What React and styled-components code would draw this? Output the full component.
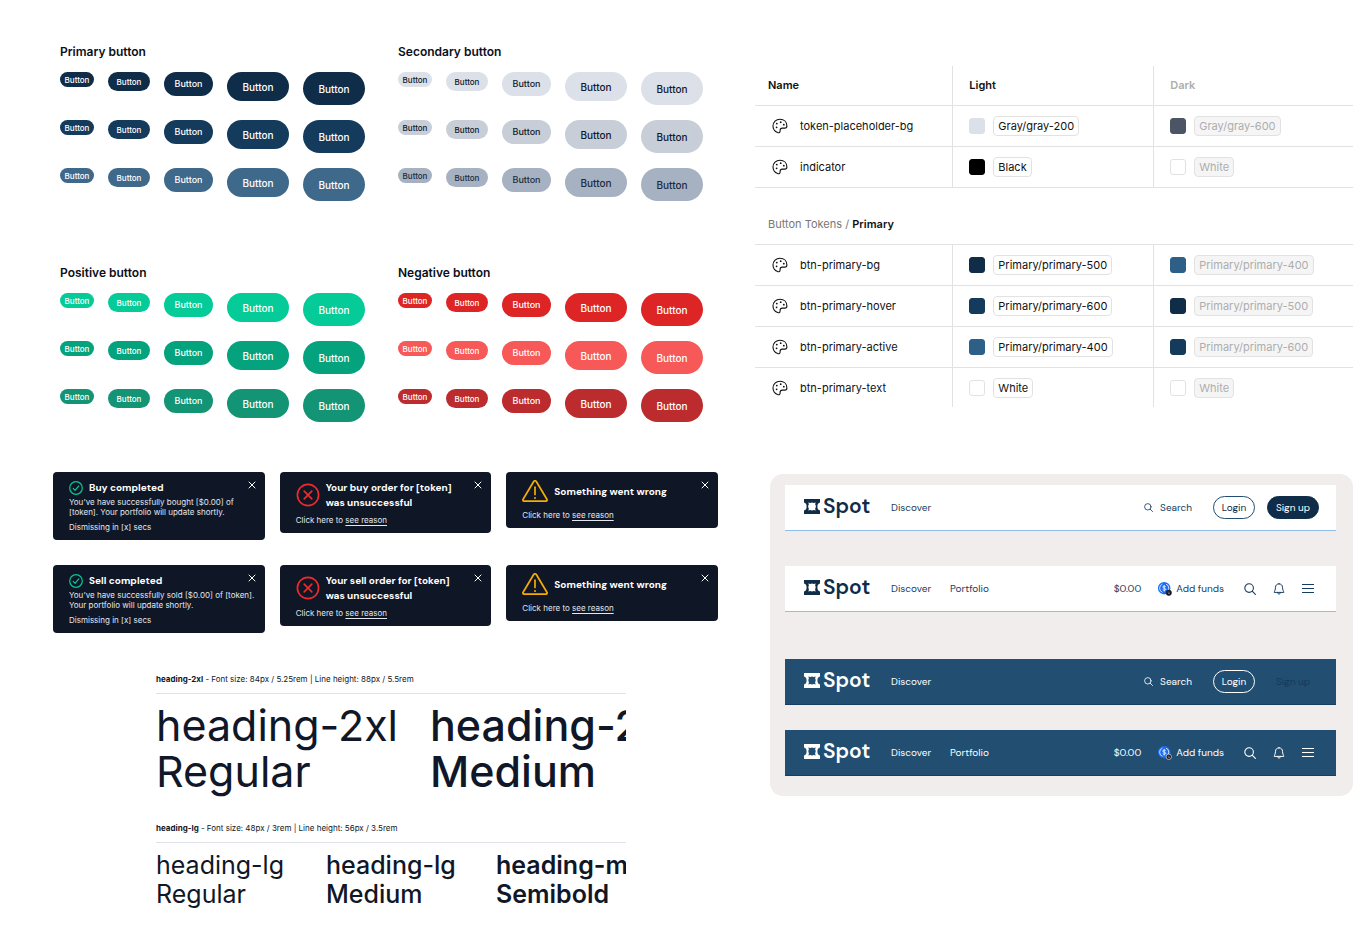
import React from "react";
import styled, { createGlobalStyle } from "styled-components";

const GlobalStyle = createGlobalStyle`
  *, *::before, *::after { box-sizing: border-box; }
  body {
    margin: 0;
    background: #ffffff;
    color: #0f1728;
    font-family: Inter, "Liberation Sans", sans-serif;
  }
  button { font: inherit; color: inherit; border: 0; background: none; padding: 0; margin: 0; cursor: pointer; }
  h1, h2, h3, p { margin: 0; }
  svg { display: block; flex: none; }
`;

const Page = styled.main`
  display: grid;
  grid-template-columns: minmax(0, 665fr) minmax(0, 598fr);
  gap: 37px;
  padding: 44px 18px 36px 53px;
`;

const Column = styled.div`
  min-width: 0;
`;

/* Buttons */

const ButtonGroups = styled.div`
  display: grid;
  grid-template-columns: 338fr 320fr;
  row-gap: 64px;
  padding-left: 7px;
`;

const GroupTitle = styled.h2`
  font-size: 12px;
  line-height: 16px;
  font-weight: 600;
  color: #0a0f18;
  margin-bottom: 12px;
`;

const ButtonRows = styled.div`
  display: flex;
  flex-direction: column;
  gap: 15px;
`;

const ButtonRow = styled.div`
  display: flex;
  align-items: flex-start;
  gap: 14px;
`;

const sizes = {
  xs: { w: 34, h: 15, f: 8 },
  sm: { w: 42, h: 19, f: 8 },
  md: { w: 49, h: 24, f: 9 },
  lg: { w: 62, h: 29, f: 10 },
  xl: { w: 62, h: 33, f: 10 },
};

const PillButton = styled.button`
  width: ${(p) => sizes[p.$size].w}px;
  height: ${(p) => sizes[p.$size].h}px;
  font-size: ${(p) => sizes[p.$size].f}px;
  font-weight: 500;
  line-height: 12px;
  border-radius: 17px;
  background: ${(p) => p.$bg};
  color: ${(p) => p.$fg};
`;

const groups = [
  { title: "Primary button", rows: [["#0f2c49", "#fff"], ["#143a5c", "#fff"], ["#3f698b", "#fff"]] },
  { title: "Secondary button", rows: [["#dce0e9", "#0f1728"], ["#c8ced8", "#0f1728"], ["#a6b2c1", "#1c2a3d"]] },
  { title: "Positive button", rows: [["#05cb98", "#fff"], ["#05a37d", "#fff"], ["#129475", "#fff"]] },
  { title: "Negative button", rows: [["#dd2525", "#fff"], ["#f75858", "#fff"], ["#bc2b2d", "#fff"]] },
];

/* Toasts */

const ToastGrid = styled.div`
  display: grid;
  grid-template-columns: repeat(3, minmax(0, 1fr));
  align-items: start;
  gap: 25px 15px;
  margin-top: 50px;
`;

const ToastCard = styled.article`
  position: relative;
  background: #0f1626;
  color: #e4e7ec;
  border-radius: 4px;
  padding: 8px 8px 8px 16px;
  font-size: 8px;
  line-height: 10px;
  white-space: nowrap;
`;

const ToastHead = styled.div`
  display: flex;
  align-items: center;
  gap: 6px;
  min-height: ${(p) => p.$height}px;
  margin-bottom: ${(p) => p.$after}px;
`;

const ToastTitle = styled.h3`
  font-family: "DM Sans", Inter, sans-serif;
  font-size: 10px;
  line-height: 15px;
  font-weight: 700;
  color: #ffffff;
  white-space: pre-line;
`;

const ToastNote = styled.p`
  margin-top: 5px;
`;

const ReasonLink = styled.a`
  color: inherit;
  text-decoration: underline;
  text-underline-offset: 2px;
`;

const CloseButton = styled.button`
  position: absolute;
  top: 9px;
  right: 9px;
  color: #ffffff;
`;

const CloseIcon = () => (
  <svg width="8" height="8" viewBox="0 0 8 8" stroke="currentColor" strokeWidth="1" strokeLinecap="round">
    <path d="M1 1 7 7M7 1 1 7" />
  </svg>
);

const CheckIcon = () => (
  <svg width="14" height="14" viewBox="0 0 14 14" fill="none" stroke="#08c796" strokeWidth="1.2" strokeLinecap="round" strokeLinejoin="round">
    <circle cx="7" cy="7" r="6.3" />
    <path d="M4.2 7.4 6.1 9.3 9.8 4.9" />
  </svg>
);

const ErrorIcon = () => (
  <svg width="24" height="24" viewBox="0 0 24 24" fill="none" stroke="#ee2a2a" strokeWidth="1.7" strokeLinecap="round">
    <circle cx="12" cy="12" r="10.6" />
    <path d="m8.2 8.2 7.6 7.6m0-7.6-7.6 7.6" />
  </svg>
);

const WarningIcon = () => (
  <svg width="26" height="22" viewBox="0 0 26 22" fill="none" stroke="#f5ad05" strokeWidth="1.7" strokeLinecap="round" strokeLinejoin="round">
    <path d="M11.7 1.5a1.5 1.5 0 0 1 2.6 0l10.6 17.7a1.3 1.3 0 0 1-1.1 2H2.2a1.3 1.3 0 0 1-1.1-2Z" />
    <path d="M13 7.2v7.2" />
    <path d="M13 17.9v.1" strokeWidth="2" />
  </svg>
);

function SuccessToast({ title, children }) {
  return (
    <ToastCard>
      <ToastHead $height={14} $after={2}>
        <CheckIcon />
        <ToastTitle>{title}</ToastTitle>
      </ToastHead>
      <p>{children}</p>
      <ToastNote>Dismissing in [x] secs</ToastNote>
      <CloseButton aria-label="Close"><CloseIcon /></CloseButton>
    </ToastCard>
  );
}

function ReasonToast({ title, icon, height, after }) {
  return (
    <ToastCard>
      <ToastHead $height={height} $after={after}>
        {icon}
        <ToastTitle>{title}</ToastTitle>
      </ToastHead>
      <p>Click here to <ReasonLink href="#reason">see reason</ReasonLink></p>
      <CloseButton aria-label="Close"><CloseIcon /></CloseButton>
    </ToastCard>
  );
}

/* Typography */

const TypeSpecs = styled.div`
  display: flex;
  flex-direction: column;
  gap: 28px;
  margin: 40px 92px 0 103px;
`;

const SpecCaption = styled.p`
  font-size: 8px;
  line-height: 12px;
  padding-bottom: 8px;
  border-bottom: 1px solid #dfe1e8;
  margin-bottom: 8px;
`;

const Samples = styled.div`
  display: grid;
  grid-auto-flow: column;
  grid-auto-columns: ${(p) => p.$column}px;
  overflow-x: clip;
  font-size: ${(p) => p.$size}px;
  line-height: ${(p) => p.$line}px;
`;

const Sample = styled.p`
  font-weight: ${(p) => p.$weight};
  white-space: nowrap;
`;

/* Token table */

const TokenTable = styled.table`
  width: 100%;
  margin-top: 22px;
  border-collapse: separate;
  border-spacing: 0;
  table-layout: fixed;
  font-size: 11px;
  line-height: 16px;
  color: #111111;
`;

const HeadCell = styled.th`
  width: ${(p) => p.$width};
  height: 40px;
  padding: 0 0 2px ${(p) => (p.$divided ? 16 : 13)}px;
  text-align: left;
  font-weight: 600;
  color: ${(p) => (p.$muted ? "#adadad" : "#111111")};
  border-bottom: 1px solid #e2e2e2;
  border-left: ${(p) => (p.$divided ? "1px solid #e2e2e2" : "0")};
`;

const Cell = styled.td`
  height: ${(p) => (p.$last ? 39 : 41)}px;
  padding: 0 0 0 ${(p) => (p.$divided ? 16 : 17)}px;
  border-bottom: ${(p) => (p.$last ? "0" : "1px solid #e2e2e2")};
  border-left: ${(p) => (p.$divided ? "1px solid #e2e2e2" : "0")};
`;

const SectionCell = styled.th`
  height: 57px;
  padding: 16px 0 0 13px;
  text-align: left;
  font-weight: 400;
  color: #777777;
  border-bottom: 1px solid #e2e2e2;

  b { font-weight: 600; color: #111111; }
`;

const TokenName = styled.span`
  display: flex;
  align-items: center;
  gap: 12px;
`;

const TokenValue = styled.span`
  display: flex;
  align-items: center;
  gap: 8px;
`;

const Swatch = styled.span`
  width: 16px;
  height: 16px;
  border-radius: 3px;
  background: ${(p) => p.$color};
  border: 1px solid ${(p) => (p.$color === "#ffffff" ? "#e2e2e2" : p.$color)};
`;

const ValueChip = styled.span`
  height: 20px;
  padding: 0 4px;
  line-height: 18px;
  border: 1px solid #e2e2e2;
  border-radius: 4px;
  background: ${(p) => (p.$muted ? "#f5f5f5" : "#ffffff")};
  color: ${(p) => (p.$muted ? "#adadad" : "#111111")};
`;

const PaletteIcon = () => (
  <svg width="16" height="16" viewBox="0 0 16 16" fill="none" stroke="#111" strokeWidth="1.1" strokeLinejoin="round">
    <path d="M8 1.2C4 1.2 1 4.2 1 8c0 3.1 1.8 5.5 4.6 6.6 1.4.5 2.5-.2 2.5-1.6v-.7c0-1.3.9-2.2 2.2-2.2h2.5c1.2 0 2.1-.9 2.1-2.1C14.9 4 12.1 1.2 8 1.2Z" />
    <g fill="#111" stroke="none">
      <circle cx="4.8" cy="5.6" r=".9" />
      <circle cx="8.7" cy="4.2" r=".9" />
      <circle cx="11.8" cy="6.7" r=".9" />
      <circle cx="4.6" cy="9.3" r=".9" />
    </g>
  </svg>
);

const baseTokens = [
  ["token-placeholder-bg", "#dce0e9", "Gray/gray-200", "#4b5565", "Gray/gray-600"],
  ["indicator", "#000000", "Black", "#ffffff", "White"],
];

const primaryTokens = [
  ["btn-primary-bg", "#0f2c49", "Primary/primary-500", "#2d5f87", "Primary/primary-400"],
  ["btn-primary-hover", "#143a5c", "Primary/primary-600", "#0f2c49", "Primary/primary-500"],
  ["btn-primary-active", "#2d5f87", "Primary/primary-400", "#143a5c", "Primary/primary-600"],
  ["btn-primary-text", "#ffffff", "White", "#ffffff", "White"],
];

function TokenRow({ token, last }) {
  const [name, light, lightName, dark, darkName] = token;
  return (
    <tr>
      <Cell $last={last}><TokenName><PaletteIcon />{name}</TokenName></Cell>
      <Cell $divided $last={last}>
        <TokenValue><Swatch $color={light} /><ValueChip>{lightName}</ValueChip></TokenValue>
      </Cell>
      <Cell $divided $last={last}>
        <TokenValue><Swatch $color={dark} /><ValueChip $muted>{darkName}</ValueChip></TokenValue>
      </Cell>
    </tr>
  );
}

/* Navigation bars */

const NavPanel = styled.section`
  display: flex;
  flex-direction: column;
  gap: 47px;
  margin: 67px 0 0 15px;
  padding: 11px 17px 20px 15px;
  border-radius: 13px;
  background: #f1edec;
`;

const NavGroup = styled.div`
  display: flex;
  flex-direction: column;
  gap: ${(p) => p.$gap}px;
`;

const Bar = styled.nav`
  display: flex;
  align-items: center;
  height: 46px;
  padding: 0 ${(p) => (p.$account ? 22 : 17)}px 0 19px;
  font-family: "DM Sans", Inter, sans-serif;
  font-size: 10px;
  line-height: 14px;
  background: ${(p) => (p.$dark ? "#214e71" : "#ffffff")};
  color: ${(p) => (p.$dark ? "#ffffff" : "#173d60")};
  border-bottom: 1px solid ${(p) => (p.$dark ? "#173d60" : "#8ebfea")};
`;

const Brand = styled.a`
  display: flex;
  align-items: center;
  gap: 3px;
  width: 87px;
  padding-bottom: 3px;
  color: ${(p) => (p.$dark ? "#ffffff" : "#0f2c49")};
  font-size: 21px;
  line-height: 24px;
  font-weight: 600;
  text-decoration: none;
`;

const NavLinks = styled.div`
  display: flex;
  gap: 19px;
  margin-right: auto;
`;

const NavLink = styled.a`
  color: inherit;
  text-decoration: none;
`;

const Actions = styled.div`
  display: flex;
  align-items: center;
  gap: ${(p) => p.$gap}px;
`;

const IconButton = styled.button`
  display: flex;
  align-items: center;
  gap: ${(p) => p.$gap || 0}px;
  margin-right: ${(p) => p.$after || 0}px;
`;

const AuthButton = styled.button`
  height: 23px;
  width: ${(p) => p.$width}px;
  border-radius: 12px;
  border: 1px solid ${(p) => p.$line};
  background: ${(p) => p.$bg};
  color: ${(p) => p.$fg};
`;

const LogoMark = () => (
  <svg width="16" height="15" viewBox="0 0 16 15" fill="currentColor" fillRule="evenodd">
    <path d="M0 0H16V3.6C14.3 3.9 13.4 5.200 13.4 7.500S14.300 11.100 16 11.400V15H0V11.400C1.700 11.100 2.600 9.800 2.600 7.500S1.700 3.900 0 3.600ZM4.300 3.500 4.900 5.300A3.800 3.800 0 0 0 4.900 9.700L4.300 11.500 6.200 10.900A3.800 3.800 0 0 0 9.800 10.900L11.700 11.500 11.100 9.700A3.800 3.800 0 0 0 11.100 5.300L11.700 3.500 9.800 4.100A3.800 3.800 0 0 0 6.200 4.100Z" />
  </svg>
);

const SearchIcon = ({ size }) => (
  <svg width={size} height={size} viewBox="0 0 12 12" fill="none" stroke="currentColor" strokeWidth="1.1" strokeLinecap="round">
    <circle cx="5.1" cy="5.1" r="4.3" />
    <path d="m8.2 8.2 3.2 3.2" />
  </svg>
);

const BellIcon = () => (
  <svg width="12" height="12" viewBox="0 0 12 12" fill="none" stroke="currentColor" strokeWidth="1" strokeLinecap="round" strokeLinejoin="round">
    <path d="M6 .8C3.9.8 2.5 2.3 2.5 4.3 2.5 7 1.3 8.2 1.2 9.4h9.6C10.7 8.2 9.5 7 9.5 4.3 9.5 2.3 8.1.8 6 .8Z" />
    <path d="M4.5 9.7c.2 1.9 2.8 1.9 3 0" />
  </svg>
);

const MenuIcon = () => (
  <svg width="12" height="10" viewBox="0 0 12 10" stroke="currentColor" strokeWidth="1">
    <path d="M0 .5h12M0 4.5h12M0 8.5h12" />
  </svg>
);

const CoinIcon = ({ dark }) => (
  <svg width="14" height="14" viewBox="0 0 14 14" fill="none">
    <circle cx="6.2" cy="6.2" r="6.2" fill="#1b6cf2" />
    <path d="M4.4 2.1a4.4 4.4 0 0 0 0 8.2M8 2.1a4.4 4.4 0 0 1 0 8.2" stroke="#fff" strokeWidth=".8" />
    <path d="M7.7 4.7c-.5-1-2.9-.9-2.9.4 0 1.5 3 .7 3 2.2 0 1.3-2.5 1.3-3.1.2M6.2 3v6.5" stroke="#fff" strokeWidth=".8" />
    <circle cx="10.8" cy="10.8" r="2.7" fill="#16191f" stroke={dark ? "#fff" : "#16191f"} strokeWidth=".6" />
    <path d="M9.6 10.2h2M10 11.5h2" stroke="#9c9bd0" strokeWidth=".6" />
  </svg>
);

function GuestBar({ dark }) {
  return (
    <Bar $dark={dark}>
      <Brand href="#home" $dark={dark}><LogoMark />Spot</Brand>
      <NavLinks><NavLink href="#discover">Discover</NavLink></NavLinks>
      <Actions $gap={12}>
        <IconButton $gap={7} $after={9}><SearchIcon size={9} />Search</IconButton>
        <AuthButton $width={42} $bg="transparent" $line={dark ? "#ffffff" : "#214e71"} $fg={dark ? "#ffffff" : "#0f2c49"}>Login</AuthButton>
        <AuthButton
          $width={52}
          $bg={dark ? "transparent" : "#0f2c49"}
          $line={dark ? "transparent" : "#0f2c49"}
          $fg={dark ? "#143a5c" : "#ffffff"}
        >
          Sign up
        </AuthButton>
      </Actions>
    </Bar>
  );
}

function AccountBar({ dark }) {
  return (
    <Bar $dark={dark} $account>
      <Brand href="#home" $dark={dark}><LogoMark />Spot</Brand>
      <NavLinks>
        <NavLink href="#discover">Discover</NavLink>
        <NavLink href="#portfolio">Portfolio</NavLink>
      </NavLinks>
      <Actions $gap={17}>
        <span>$0.00</span>
        <IconButton $gap={4} $after={3}><CoinIcon dark={dark} />Add funds</IconButton>
        <IconButton aria-label="Search"><SearchIcon size={12} /></IconButton>
        <IconButton aria-label="Notifications"><BellIcon /></IconButton>
        <IconButton aria-label="Menu"><MenuIcon /></IconButton>
      </Actions>
    </Bar>
  );
}

export default function App() {
  return (
    <>
      <GlobalStyle />
      <Page>
        <Column>
          <ButtonGroups>
            {groups.map((group) => (
              <section key={group.title}>
                <GroupTitle>{group.title}</GroupTitle>
                <ButtonRows>
                  {group.rows.map(([bg, fg]) => (
                    <ButtonRow key={bg}>
                      {Object.keys(sizes).map((size) => (
                        <PillButton key={size} $size={size} $bg={bg} $fg={fg}>Button</PillButton>
                      ))}
                    </ButtonRow>
                  ))}
                </ButtonRows>
              </section>
            ))}
          </ButtonGroups>

          <ToastGrid>
            <SuccessToast title="Buy completed">
              You’ve have successfully bought [$0.00] of<br />[token]. Your portfolio will update shortly.
            </SuccessToast>
            <ReasonToast title={"Your buy order for [token]\nwas unsuccessful"} icon={<ErrorIcon />} height={30} after={5} />
            <ReasonToast title="Something went wrong" icon={<WarningIcon />} height={22} after={8} />
            <SuccessToast title="Sell completed">
              You’ve have successfully sold [$0.00] of [token].<br />Your portfolio will update shortly.
            </SuccessToast>
            <ReasonToast title={"Your sell order for [token]\nwas unsuccessful"} icon={<ErrorIcon />} height={30} after={5} />
            <ReasonToast title="Something went wrong" icon={<WarningIcon />} height={22} after={8} />
          </ToastGrid>

          <TypeSpecs>
            <section>
              <SpecCaption><b>heading-2xl</b> - Font size: 84px / 5.25rem | Line height: 88px / 5.5rem</SpecCaption>
              <Samples $column={274} $size={43} $line={46}>
                <Sample $weight={400}>heading-2xl<br />Regular</Sample>
                <Sample $weight={500}>heading-2xl<br />Medium</Sample>
              </Samples>
            </section>
            <section>
              <SpecCaption><b>heading-lg</b> - Font size: 48px / 3rem | Line height: 56px / 3.5rem</SpecCaption>
              <Samples $column={170} $size={25} $line={29}>
                <Sample $weight={400}>heading-lg<br />Regular</Sample>
                <Sample $weight={500}>heading-lg<br />Medium</Sample>
                <Sample $weight={600}>heading-md<br />Semibold</Sample>
              </Samples>
            </section>
          </TypeSpecs>
        </Column>

        <Column>
          <TokenTable>
            <thead>
              <tr>
                <HeadCell scope="col" $width="33%">Name</HeadCell>
                <HeadCell scope="col" $width="33.6%" $divided>Light</HeadCell>
                <HeadCell scope="col" $divided $muted>Dark</HeadCell>
              </tr>
            </thead>
            <tbody>
              {baseTokens.map((token) => <TokenRow key={token[0]} token={token} />)}
              <tr><SectionCell colSpan={3} scope="rowgroup">Button Tokens / <b>Primary</b></SectionCell></tr>
              {primaryTokens.map((token, i) => (
                <TokenRow key={token[0]} token={token} last={i === primaryTokens.length - 1} />
              ))}
            </tbody>
          </TokenTable>

          <NavPanel>
            <NavGroup $gap={35}>
              <GuestBar />
              <AccountBar />
            </NavGroup>
            <NavGroup $gap={25}>
              <GuestBar dark />
              <AccountBar dark />
            </NavGroup>
          </NavPanel>
        </Column>
      </Page>
    </>
  );
}
